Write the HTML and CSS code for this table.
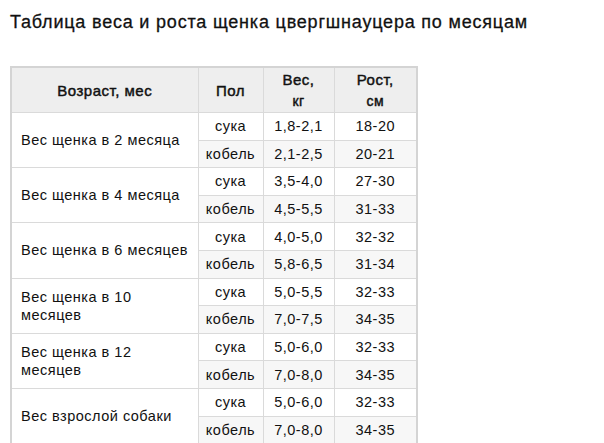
FILE: index.html
```html
<!DOCTYPE html>
<html lang="ru">
<head>
<meta charset="utf-8">
<link rel="stylesheet" href="styles.css">
</head>
<body>
<h1 class="title">Таблица веса и роста щенка цвергшнауцера по месяцам</h1>
<table class="grid">
  <colgroup>
    <col class="c-age"><col class="c-sex"><col class="c-w"><col class="c-h">
  </colgroup>
  <thead>
    <tr><th>Возраст, мес</th><th>Пол</th><th>Вес,<br><span class="unit">кг</span></th><th>Рост,<br><span class="unit">см</span></th></tr>
  </thead>
  <tbody>
    <tr><td class="age" rowspan="2">Вес щенка в 2 месяца</td><td>сука</td><td>1,8-2,1</td><td>18-20</td></tr>
    <tr class="m"><td>кобель</td><td>2,1-2,5</td><td>20-21</td></tr>
    <tr><td class="age" rowspan="2">Вес щенка в 4 месяца</td><td>сука</td><td>3,5-4,0</td><td>27-30</td></tr>
    <tr class="m"><td>кобель</td><td>4,5-5,5</td><td>31-33</td></tr>
    <tr><td class="age" rowspan="2">Вес щенка в 6 месяцев</td><td>сука</td><td>4,0-5,0</td><td>32-32</td></tr>
    <tr class="m"><td>кобель</td><td>5,8-6,5</td><td>31-34</td></tr>
    <tr><td class="age" rowspan="2">Вес щенка в 10<br>месяцев</td><td>сука</td><td>5,0-5,5</td><td>32-33</td></tr>
    <tr class="m"><td>кобель</td><td>7,0-7,5</td><td>34-35</td></tr>
    <tr><td class="age" rowspan="2">Вес щенка в 12<br>месяцев</td><td>сука</td><td>5,0-6,0</td><td>32-33</td></tr>
    <tr class="m"><td>кобель</td><td>7,0-8,0</td><td>34-35</td></tr>
    <tr><td class="age" rowspan="2">Вес взрослой собаки</td><td>сука</td><td>5,0-6,0</td><td>32-33</td></tr>
    <tr class="m"><td>кобель</td><td>7,0-8,0</td><td>34-35</td></tr>
  </tbody>
</table>
</body>
</html>
```
FILE: styles.css
```css
html, body {
  margin: 0;
  padding: 0;
  background: #ffffff;
}
body {
  padding: 12px 10px 0 10px;
  font-family: "Liberation Sans", Arial, sans-serif;
  color: #111111;
}
.title {
  margin: 0 0 34px 0;
  font-size: 18px;
  line-height: 20px;
  font-weight: normal;
  letter-spacing: 0.8px;
  color: #111111;
  -webkit-text-stroke: 0.3px #111111;
}
.grid {
  border-collapse: collapse;
  border: 2px solid #d4d4d4;
  table-layout: fixed;
  width: 406px;
  font-size: 14.5px;
  letter-spacing: 0.5px;
}
.c-age { width: 187px; }
.c-sex { width: 65px; }
.c-w { width: 71px; }
.c-h { width: 83px; }
.grid th, .grid td {
  border: 1px solid #dadada;
  padding: 0;
  text-align: center;
  vertical-align: middle;
}
.grid th {
  height: 44px;
  background: #eeeeee;
  font-weight: normal;
  -webkit-text-stroke: 0.45px #111111;
  font-size: 15px;
  line-height: 21px;
  color: #111111;
}
.grid th .unit {
  font-size: 14px;
}
.grid td {
  height: 26.6px;
  line-height: 18px;
  color: #111111;
}
.grid td.age {
  text-align: left;
  padding-left: 9px;
  background: #ffffff;
}
.grid tr.m td {
  background: #f7f7f7;
}
```
